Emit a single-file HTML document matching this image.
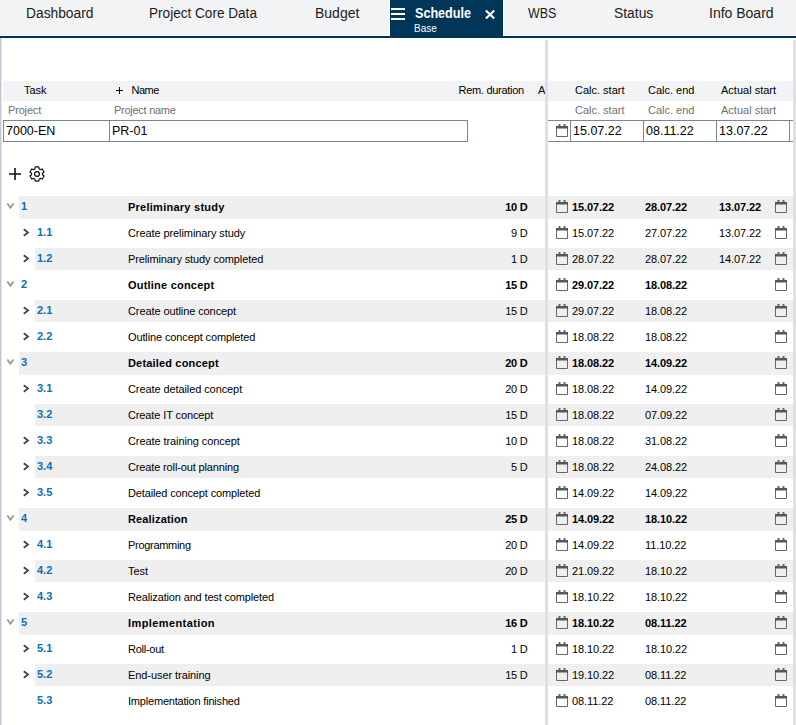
<!DOCTYPE html><html><head><meta charset="utf-8"><style>
*{margin:0;padding:0;box-sizing:border-box}
html,body{width:796px;height:725px;overflow:hidden;background:#fff}
body{position:relative;font-family:"Liberation Sans",sans-serif;color:#000}
.a{position:absolute;white-space:nowrap}
.tabbar{position:absolute;left:0;top:0;width:796px;height:35px;background:#f2f3f5}
.tabline{position:absolute;left:0;top:36px;width:796px;height:2px;background:#013258}
.tab{position:absolute;top:0;font-size:14px;line-height:26px;color:#1c1c1c}
.act{position:absolute;left:390px;top:0;width:113px;height:38px;background:#023659}
.vsep{position:absolute;top:0;width:1px;height:36px;background:#fff}
.lb{position:absolute;left:0;top:38px;width:1px;height:687px;background:#c3c5d5;box-shadow:1px 0 0 #e6e7ef}
.spl{position:absolute;left:545px;top:40px;width:3px;height:685px;background:#e3dde6}
.rb{position:absolute;left:793px;top:40px;width:3px;height:685px;background:#e3dde6}
.hband{position:absolute;top:81px;height:20px;background:#f2f3f5}
.ht{font-size:11px;line-height:20px;top:80px}
.st{font-size:11px;line-height:20px;top:100px;color:#707070}
.inp{position:absolute;top:120px;height:22px;border:1px solid #7b8693}
.it{font-size:12.5px;line-height:20px;top:121px;color:#000}
.row{position:absolute;left:0;width:796px;height:26px}
.band{position:absolute;top:0;height:23px;background:#efefef}
.t{position:absolute;top:0;font-size:11px;line-height:23px;white-space:nowrap}
.b{font-weight:bold}
.d{letter-spacing:-0.1px}
.num{color:#0a70b0;font-weight:bold;margin-top:-1px}
.cal{position:absolute}
svg{display:block}
</style></head><body>
<div class="tabbar"></div>
<div class="a" style="left:0;top:35px;width:796px;height:1px;background:#fff"></div>
<div class="tabline"></div>
<div class="a tab" style="left:26px;transform:scaleX(0.985);transform-origin:0 0">Dashboard</div>
<div class="a tab" style="left:149px;transform:scaleX(0.97);transform-origin:0 0">Project Core Data</div>
<div class="a tab" style="left:315px;transform:scaleX(1);transform-origin:0 0">Budget</div>
<div class="a tab" style="left:528px;transform:scaleX(0.89);transform-origin:0 0">WBS</div>
<div class="a tab" style="left:614px;transform:scaleX(0.99);transform-origin:0 0">Status</div>
<div class="a tab" style="left:709px;transform:scaleX(1);transform-origin:0 0">Info Board</div>
<div class="act"></div>
<div class="vsep" style="left:389px"></div><div class="vsep" style="left:503px"></div>
<div class="a" style="left:391px;top:8.3px;width:14px;height:1.6px;background:#fff"></div>
<div class="a" style="left:391px;top:13.3px;width:14px;height:1.6px;background:#fff"></div>
<div class="a" style="left:391px;top:18.3px;width:14px;height:1.6px;background:#fff"></div>
<div class="a" style="left:415px;top:0;font-size:14px;font-weight:bold;line-height:26px;color:#fff;transform:scaleX(0.9);transform-origin:0 0">Schedule</div>
<div class="a" style="left:414px;top:21px;font-size:10px;line-height:16px;color:#fff">Base</div>
<svg class="a" style="left:484px;top:9px" width="12" height="12" viewBox="0 0 12 12"><path d="M1.9 1.5l8.3 8.1M10.2 1.5l-8.3 8.1" stroke="#fff" stroke-width="2.1"/></svg>
<div class="lb"></div><div class="spl"></div><div class="rb"></div>
<div class="hband" style="left:3px;width:542px"></div>
<div class="hband" style="left:548px;width:245px"></div>
<div class="a ht" style="left:24px">Task</div>
<svg class="a" style="left:116px;top:87px" width="7" height="7" viewBox="0 0 7 7"><path d="M3.5 0v7M0 3.5h7" stroke="#111" stroke-width="1"/></svg>
<div class="a ht" style="left:131.5px;letter-spacing:-0.5px">Name</div>
<div class="a ht" style="left:458.5px;letter-spacing:-0.28px">Rem. duration</div>
<div class="a ht" style="left:538px;width:7px;overflow:hidden">A</div>
<div class="a ht" style="left:575px">Calc. start</div>
<div class="a ht" style="left:648px">Calc. end</div>
<div class="a ht" style="left:721px">Actual start</div>
<div class="a st" style="left:8px;letter-spacing:-0.17px">Project</div>
<div class="a st" style="left:114px;letter-spacing:-0.27px">Project name</div>
<div class="a st" style="left:575px">Calc. start</div>
<div class="a st" style="left:648px">Calc. end</div>
<div class="a st" style="left:721px">Actual start</div>
<div class="inp" style="left:3px;width:107px"></div>
<div class="inp" style="left:109px;width:359px"></div>
<div class="inp" style="left:548px;width:23px;border-left:none;border-right:none"></div>
<div class="inp" style="left:570px;width:74px"></div>
<div class="inp" style="left:643px;width:74px"></div>
<div class="inp" style="left:716px;width:77px;border-right:none"></div>
<div class="a" style="left:789px;top:120px;width:1px;height:22px;background:#7b8693"></div>
<svg class="cal" style="left:556px;top:124px" width="12" height="13" viewBox="0 0 12 13"><path d="M0.5 2.5v10h11v-10" fill="none" stroke="#666" stroke-width="1"/><rect x="0" y="2" width="12" height="2.5" fill="#555"/><rect x="2.5" y="0" width="2" height="2.5" fill="#666"/><rect x="7.5" y="0" width="2" height="2.5" fill="#666"/></svg>
<div class="a it" style="left:6px">7000-EN</div>
<div class="a it" style="left:112px">PR-01</div>
<div class="a it" style="left:573px">15.07.22</div>
<div class="a it" style="left:646px">08.11.22</div>
<div class="a it" style="left:719px">13.07.22</div>
<svg class="a" style="left:8px;top:167px" width="14" height="14" viewBox="0 0 14 14"><path d="M7 1v12M1 7h12" stroke="#111" stroke-width="1.6"/></svg>
<svg class="a" style="left:28px;top:165px" width="18" height="18" viewBox="-9 -9 18 18"><path d="M-3.32 -4.39L-3.04 -4.58L-2.75 -4.76L-2.45 -4.92L-2.14 -5.07L-2.14 -5.07L-1.74 -7.09L1.74 -7.09L2.14 -5.07L2.14 -5.07L2.45 -4.92L2.75 -4.76L3.04 -4.58L3.32 -4.39L3.32 -4.39L5.27 -5.05L7.01 -2.04L5.46 -0.68L5.46 -0.68L5.49 -0.34L5.50 -0.00L5.49 0.34L5.46 0.68L5.46 0.68L7.01 2.04L5.27 5.05L3.32 4.39L3.32 4.39L3.04 4.58L2.75 4.76L2.45 4.92L2.14 5.07L2.14 5.07L1.74 7.09L-1.74 7.09L-2.14 5.07L-2.14 5.07L-2.45 4.92L-2.75 4.76L-3.04 4.58L-3.32 4.39L-3.32 4.39L-5.27 5.05L-7.01 2.04L-5.46 0.68L-5.46 0.68L-5.49 0.34L-5.50 -0.00L-5.49 -0.34L-5.46 -0.68L-5.46 -0.68L-7.01 -2.04L-5.27 -5.05L-3.32 -4.39Z" fill="none" stroke="#111" stroke-width="1.2" stroke-linejoin="round"/><circle cx="0" cy="0" r="2.4" fill="none" stroke="#111" stroke-width="1.2"/></svg>
<div class="row" style="top:196px">
<div class="band" style="left:19px;width:526px;height:23px"></div>
<div class="band" style="left:548px;width:245px;height:23px"></div>
<div class="a" style="left:6px;top:5.5px"><svg width="9" height="8" viewBox="0 0 9 8"><path d="M1.3 1.5l3.1 4.2l3.1-4.2" fill="none" stroke="#999" stroke-width="1.9"/></svg></div>
<div class="t num" style="left:21px">1</div>
<div class="t b" style="left:128px;letter-spacing:0.253px">Preliminary study</div>
<div class="t b" style="right:268.7px;letter-spacing:-0.3px">10 D</div>
<svg class="cal" style="left:556px;top:4px" width="12" height="13" viewBox="0 0 12 13"><path d="M0.5 2.5v10h11v-10" fill="none" stroke="#666" stroke-width="1"/><rect x="0" y="2" width="12" height="2.5" fill="#555"/><rect x="2.5" y="0" width="2" height="2.5" fill="#666"/><rect x="7.5" y="0" width="2" height="2.5" fill="#666"/></svg>
<div class="t d b" style="left:572px">15.07.22</div>
<div class="t d b" style="left:645px">28.07.22</div>
<div class="t d b" style="left:719px">13.07.22</div>
<svg class="cal" style="left:775px;top:4px" width="12" height="13" viewBox="0 0 12 13"><path d="M0.5 2.5v10h11v-10" fill="none" stroke="#666" stroke-width="1"/><rect x="0" y="2" width="12" height="2.5" fill="#555"/><rect x="2.5" y="0" width="2" height="2.5" fill="#666"/><rect x="7.5" y="0" width="2" height="2.5" fill="#666"/></svg>
</div>
<div class="row" style="top:222px">
<div class="a" style="left:22px;top:6px"><svg width="8" height="9" viewBox="0 0 8 9"><path d="M1.8 1.2l4.2 3.3l-4.2 3.3" fill="none" stroke="#4a4a4a" stroke-width="1.9"/></svg></div>
<div class="t num" style="left:37px">1.1</div>
<div class="t" style="left:128px;letter-spacing:-0.087px">Create preliminary study</div>
<div class="t" style="right:268.7px;letter-spacing:-0.3px">9 D</div>
<svg class="cal" style="left:556px;top:4px" width="12" height="13" viewBox="0 0 12 13"><path d="M0.5 2.5v10h11v-10" fill="none" stroke="#666" stroke-width="1"/><rect x="0" y="2" width="12" height="2.5" fill="#555"/><rect x="2.5" y="0" width="2" height="2.5" fill="#666"/><rect x="7.5" y="0" width="2" height="2.5" fill="#666"/></svg>
<div class="t d" style="left:572px">15.07.22</div>
<div class="t d" style="left:645px">27.07.22</div>
<div class="t d" style="left:719px">13.07.22</div>
<svg class="cal" style="left:775px;top:4px" width="12" height="13" viewBox="0 0 12 13"><path d="M0.5 2.5v10h11v-10" fill="none" stroke="#666" stroke-width="1"/><rect x="0" y="2" width="12" height="2.5" fill="#555"/><rect x="2.5" y="0" width="2" height="2.5" fill="#666"/><rect x="7.5" y="0" width="2" height="2.5" fill="#666"/></svg>
</div>
<div class="row" style="top:248px">
<div class="band" style="left:35px;width:510px;height:22px"></div>
<div class="band" style="left:548px;width:245px;height:22px"></div>
<div class="a" style="left:22px;top:6px"><svg width="8" height="9" viewBox="0 0 8 9"><path d="M1.8 1.2l4.2 3.3l-4.2 3.3" fill="none" stroke="#4a4a4a" stroke-width="1.9"/></svg></div>
<div class="t num" style="left:37px">1.2</div>
<div class="t" style="left:128px;letter-spacing:-0.111px">Preliminary study completed</div>
<div class="t" style="right:268.7px;letter-spacing:-0.3px">1 D</div>
<svg class="cal" style="left:556px;top:4px" width="12" height="13" viewBox="0 0 12 13"><path d="M0.5 2.5v10h11v-10" fill="none" stroke="#666" stroke-width="1"/><rect x="0" y="2" width="12" height="2.5" fill="#555"/><rect x="2.5" y="0" width="2" height="2.5" fill="#666"/><rect x="7.5" y="0" width="2" height="2.5" fill="#666"/></svg>
<div class="t d" style="left:572px">28.07.22</div>
<div class="t d" style="left:645px">28.07.22</div>
<div class="t d" style="left:719px">14.07.22</div>
<svg class="cal" style="left:775px;top:4px" width="12" height="13" viewBox="0 0 12 13"><path d="M0.5 2.5v10h11v-10" fill="none" stroke="#666" stroke-width="1"/><rect x="0" y="2" width="12" height="2.5" fill="#555"/><rect x="2.5" y="0" width="2" height="2.5" fill="#666"/><rect x="7.5" y="0" width="2" height="2.5" fill="#666"/></svg>
</div>
<div class="row" style="top:274px">
<div class="a" style="left:6px;top:5.5px"><svg width="9" height="8" viewBox="0 0 9 8"><path d="M1.3 1.5l3.1 4.2l3.1-4.2" fill="none" stroke="#999" stroke-width="1.9"/></svg></div>
<div class="t num" style="left:21px">2</div>
<div class="t b" style="left:128px;letter-spacing:0.213px">Outline concept</div>
<div class="t b" style="right:268.7px;letter-spacing:-0.3px">15 D</div>
<svg class="cal" style="left:556px;top:4px" width="12" height="13" viewBox="0 0 12 13"><path d="M0.5 2.5v10h11v-10" fill="none" stroke="#666" stroke-width="1"/><rect x="0" y="2" width="12" height="2.5" fill="#555"/><rect x="2.5" y="0" width="2" height="2.5" fill="#666"/><rect x="7.5" y="0" width="2" height="2.5" fill="#666"/></svg>
<div class="t d b" style="left:572px">29.07.22</div>
<div class="t d b" style="left:645px">18.08.22</div>
<svg class="cal" style="left:775px;top:4px" width="12" height="13" viewBox="0 0 12 13"><path d="M0.5 2.5v10h11v-10" fill="none" stroke="#666" stroke-width="1"/><rect x="0" y="2" width="12" height="2.5" fill="#555"/><rect x="2.5" y="0" width="2" height="2.5" fill="#666"/><rect x="7.5" y="0" width="2" height="2.5" fill="#666"/></svg>
</div>
<div class="row" style="top:300px">
<div class="band" style="left:35px;width:510px;height:22px"></div>
<div class="band" style="left:548px;width:245px;height:22px"></div>
<div class="a" style="left:22px;top:6px"><svg width="8" height="9" viewBox="0 0 8 9"><path d="M1.8 1.2l4.2 3.3l-4.2 3.3" fill="none" stroke="#4a4a4a" stroke-width="1.9"/></svg></div>
<div class="t num" style="left:37px">2.1</div>
<div class="t" style="left:128px;letter-spacing:-0.091px">Create outline concept</div>
<div class="t" style="right:268.7px;letter-spacing:-0.3px">15 D</div>
<svg class="cal" style="left:556px;top:4px" width="12" height="13" viewBox="0 0 12 13"><path d="M0.5 2.5v10h11v-10" fill="none" stroke="#666" stroke-width="1"/><rect x="0" y="2" width="12" height="2.5" fill="#555"/><rect x="2.5" y="0" width="2" height="2.5" fill="#666"/><rect x="7.5" y="0" width="2" height="2.5" fill="#666"/></svg>
<div class="t d" style="left:572px">29.07.22</div>
<div class="t d" style="left:645px">18.08.22</div>
<svg class="cal" style="left:775px;top:4px" width="12" height="13" viewBox="0 0 12 13"><path d="M0.5 2.5v10h11v-10" fill="none" stroke="#666" stroke-width="1"/><rect x="0" y="2" width="12" height="2.5" fill="#555"/><rect x="2.5" y="0" width="2" height="2.5" fill="#666"/><rect x="7.5" y="0" width="2" height="2.5" fill="#666"/></svg>
</div>
<div class="row" style="top:326px">
<div class="a" style="left:22px;top:6px"><svg width="8" height="9" viewBox="0 0 8 9"><path d="M1.8 1.2l4.2 3.3l-4.2 3.3" fill="none" stroke="#4a4a4a" stroke-width="1.9"/></svg></div>
<div class="t num" style="left:37px">2.2</div>
<div class="t" style="left:128px;letter-spacing:-0.120px">Outline concept completed</div>
<svg class="cal" style="left:556px;top:4px" width="12" height="13" viewBox="0 0 12 13"><path d="M0.5 2.5v10h11v-10" fill="none" stroke="#666" stroke-width="1"/><rect x="0" y="2" width="12" height="2.5" fill="#555"/><rect x="2.5" y="0" width="2" height="2.5" fill="#666"/><rect x="7.5" y="0" width="2" height="2.5" fill="#666"/></svg>
<div class="t d" style="left:572px">18.08.22</div>
<div class="t d" style="left:645px">18.08.22</div>
<svg class="cal" style="left:775px;top:4px" width="12" height="13" viewBox="0 0 12 13"><path d="M0.5 2.5v10h11v-10" fill="none" stroke="#666" stroke-width="1"/><rect x="0" y="2" width="12" height="2.5" fill="#555"/><rect x="2.5" y="0" width="2" height="2.5" fill="#666"/><rect x="7.5" y="0" width="2" height="2.5" fill="#666"/></svg>
</div>
<div class="row" style="top:352px">
<div class="band" style="left:19px;width:526px;height:23px"></div>
<div class="band" style="left:548px;width:245px;height:23px"></div>
<div class="a" style="left:6px;top:5.5px"><svg width="9" height="8" viewBox="0 0 9 8"><path d="M1.3 1.5l3.1 4.2l3.1-4.2" fill="none" stroke="#999" stroke-width="1.9"/></svg></div>
<div class="t num" style="left:21px">3</div>
<div class="t b" style="left:128px;letter-spacing:0.169px">Detailed concept</div>
<div class="t b" style="right:268.7px;letter-spacing:-0.3px">20 D</div>
<svg class="cal" style="left:556px;top:4px" width="12" height="13" viewBox="0 0 12 13"><path d="M0.5 2.5v10h11v-10" fill="none" stroke="#666" stroke-width="1"/><rect x="0" y="2" width="12" height="2.5" fill="#555"/><rect x="2.5" y="0" width="2" height="2.5" fill="#666"/><rect x="7.5" y="0" width="2" height="2.5" fill="#666"/></svg>
<div class="t d b" style="left:572px">18.08.22</div>
<div class="t d b" style="left:645px">14.09.22</div>
<svg class="cal" style="left:775px;top:4px" width="12" height="13" viewBox="0 0 12 13"><path d="M0.5 2.5v10h11v-10" fill="none" stroke="#666" stroke-width="1"/><rect x="0" y="2" width="12" height="2.5" fill="#555"/><rect x="2.5" y="0" width="2" height="2.5" fill="#666"/><rect x="7.5" y="0" width="2" height="2.5" fill="#666"/></svg>
</div>
<div class="row" style="top:378px">
<div class="a" style="left:22px;top:6px"><svg width="8" height="9" viewBox="0 0 8 9"><path d="M1.8 1.2l4.2 3.3l-4.2 3.3" fill="none" stroke="#4a4a4a" stroke-width="1.9"/></svg></div>
<div class="t num" style="left:37px">3.1</div>
<div class="t" style="left:128px;letter-spacing:-0.091px">Create detailed concept</div>
<div class="t" style="right:268.7px;letter-spacing:-0.3px">20 D</div>
<svg class="cal" style="left:556px;top:4px" width="12" height="13" viewBox="0 0 12 13"><path d="M0.5 2.5v10h11v-10" fill="none" stroke="#666" stroke-width="1"/><rect x="0" y="2" width="12" height="2.5" fill="#555"/><rect x="2.5" y="0" width="2" height="2.5" fill="#666"/><rect x="7.5" y="0" width="2" height="2.5" fill="#666"/></svg>
<div class="t d" style="left:572px">18.08.22</div>
<div class="t d" style="left:645px">14.09.22</div>
<svg class="cal" style="left:775px;top:4px" width="12" height="13" viewBox="0 0 12 13"><path d="M0.5 2.5v10h11v-10" fill="none" stroke="#666" stroke-width="1"/><rect x="0" y="2" width="12" height="2.5" fill="#555"/><rect x="2.5" y="0" width="2" height="2.5" fill="#666"/><rect x="7.5" y="0" width="2" height="2.5" fill="#666"/></svg>
</div>
<div class="row" style="top:404px">
<div class="band" style="left:35px;width:510px;height:22px"></div>
<div class="band" style="left:548px;width:245px;height:22px"></div>
<div class="t num" style="left:37px">3.2</div>
<div class="t" style="left:128px;letter-spacing:-0.118px">Create IT concept</div>
<div class="t" style="right:268.7px;letter-spacing:-0.3px">15 D</div>
<svg class="cal" style="left:556px;top:4px" width="12" height="13" viewBox="0 0 12 13"><path d="M0.5 2.5v10h11v-10" fill="none" stroke="#666" stroke-width="1"/><rect x="0" y="2" width="12" height="2.5" fill="#555"/><rect x="2.5" y="0" width="2" height="2.5" fill="#666"/><rect x="7.5" y="0" width="2" height="2.5" fill="#666"/></svg>
<div class="t d" style="left:572px">18.08.22</div>
<div class="t d" style="left:645px">07.09.22</div>
<svg class="cal" style="left:775px;top:4px" width="12" height="13" viewBox="0 0 12 13"><path d="M0.5 2.5v10h11v-10" fill="none" stroke="#666" stroke-width="1"/><rect x="0" y="2" width="12" height="2.5" fill="#555"/><rect x="2.5" y="0" width="2" height="2.5" fill="#666"/><rect x="7.5" y="0" width="2" height="2.5" fill="#666"/></svg>
</div>
<div class="row" style="top:430px">
<div class="a" style="left:22px;top:6px"><svg width="8" height="9" viewBox="0 0 8 9"><path d="M1.8 1.2l4.2 3.3l-4.2 3.3" fill="none" stroke="#4a4a4a" stroke-width="1.9"/></svg></div>
<div class="t num" style="left:37px">3.3</div>
<div class="t" style="left:128px;letter-spacing:-0.087px">Create training concept</div>
<div class="t" style="right:268.7px;letter-spacing:-0.3px">10 D</div>
<svg class="cal" style="left:556px;top:4px" width="12" height="13" viewBox="0 0 12 13"><path d="M0.5 2.5v10h11v-10" fill="none" stroke="#666" stroke-width="1"/><rect x="0" y="2" width="12" height="2.5" fill="#555"/><rect x="2.5" y="0" width="2" height="2.5" fill="#666"/><rect x="7.5" y="0" width="2" height="2.5" fill="#666"/></svg>
<div class="t d" style="left:572px">18.08.22</div>
<div class="t d" style="left:645px">31.08.22</div>
<svg class="cal" style="left:775px;top:4px" width="12" height="13" viewBox="0 0 12 13"><path d="M0.5 2.5v10h11v-10" fill="none" stroke="#666" stroke-width="1"/><rect x="0" y="2" width="12" height="2.5" fill="#555"/><rect x="2.5" y="0" width="2" height="2.5" fill="#666"/><rect x="7.5" y="0" width="2" height="2.5" fill="#666"/></svg>
</div>
<div class="row" style="top:456px">
<div class="band" style="left:35px;width:510px;height:22px"></div>
<div class="band" style="left:548px;width:245px;height:22px"></div>
<div class="a" style="left:22px;top:6px"><svg width="8" height="9" viewBox="0 0 8 9"><path d="M1.8 1.2l4.2 3.3l-4.2 3.3" fill="none" stroke="#4a4a4a" stroke-width="1.9"/></svg></div>
<div class="t num" style="left:37px">3.4</div>
<div class="t" style="left:128px;letter-spacing:-0.142px">Create roll-out planning</div>
<div class="t" style="right:268.7px;letter-spacing:-0.3px">5 D</div>
<svg class="cal" style="left:556px;top:4px" width="12" height="13" viewBox="0 0 12 13"><path d="M0.5 2.5v10h11v-10" fill="none" stroke="#666" stroke-width="1"/><rect x="0" y="2" width="12" height="2.5" fill="#555"/><rect x="2.5" y="0" width="2" height="2.5" fill="#666"/><rect x="7.5" y="0" width="2" height="2.5" fill="#666"/></svg>
<div class="t d" style="left:572px">18.08.22</div>
<div class="t d" style="left:645px">24.08.22</div>
<svg class="cal" style="left:775px;top:4px" width="12" height="13" viewBox="0 0 12 13"><path d="M0.5 2.5v10h11v-10" fill="none" stroke="#666" stroke-width="1"/><rect x="0" y="2" width="12" height="2.5" fill="#555"/><rect x="2.5" y="0" width="2" height="2.5" fill="#666"/><rect x="7.5" y="0" width="2" height="2.5" fill="#666"/></svg>
</div>
<div class="row" style="top:482px">
<div class="a" style="left:22px;top:6px"><svg width="8" height="9" viewBox="0 0 8 9"><path d="M1.8 1.2l4.2 3.3l-4.2 3.3" fill="none" stroke="#4a4a4a" stroke-width="1.9"/></svg></div>
<div class="t num" style="left:37px">3.5</div>
<div class="t" style="left:128px;letter-spacing:-0.138px">Detailed concept completed</div>
<svg class="cal" style="left:556px;top:4px" width="12" height="13" viewBox="0 0 12 13"><path d="M0.5 2.5v10h11v-10" fill="none" stroke="#666" stroke-width="1"/><rect x="0" y="2" width="12" height="2.5" fill="#555"/><rect x="2.5" y="0" width="2" height="2.5" fill="#666"/><rect x="7.5" y="0" width="2" height="2.5" fill="#666"/></svg>
<div class="t d" style="left:572px">14.09.22</div>
<div class="t d" style="left:645px">14.09.22</div>
<svg class="cal" style="left:775px;top:4px" width="12" height="13" viewBox="0 0 12 13"><path d="M0.5 2.5v10h11v-10" fill="none" stroke="#666" stroke-width="1"/><rect x="0" y="2" width="12" height="2.5" fill="#555"/><rect x="2.5" y="0" width="2" height="2.5" fill="#666"/><rect x="7.5" y="0" width="2" height="2.5" fill="#666"/></svg>
</div>
<div class="row" style="top:508px">
<div class="band" style="left:19px;width:526px;height:23px"></div>
<div class="band" style="left:548px;width:245px;height:23px"></div>
<div class="a" style="left:6px;top:5.5px"><svg width="9" height="8" viewBox="0 0 9 8"><path d="M1.3 1.5l3.1 4.2l3.1-4.2" fill="none" stroke="#999" stroke-width="1.9"/></svg></div>
<div class="t num" style="left:21px">4</div>
<div class="t b" style="left:128px;letter-spacing:0.145px">Realization</div>
<div class="t b" style="right:268.7px;letter-spacing:-0.3px">25 D</div>
<svg class="cal" style="left:556px;top:4px" width="12" height="13" viewBox="0 0 12 13"><path d="M0.5 2.5v10h11v-10" fill="none" stroke="#666" stroke-width="1"/><rect x="0" y="2" width="12" height="2.5" fill="#555"/><rect x="2.5" y="0" width="2" height="2.5" fill="#666"/><rect x="7.5" y="0" width="2" height="2.5" fill="#666"/></svg>
<div class="t d b" style="left:572px">14.09.22</div>
<div class="t d b" style="left:645px">18.10.22</div>
<svg class="cal" style="left:775px;top:4px" width="12" height="13" viewBox="0 0 12 13"><path d="M0.5 2.5v10h11v-10" fill="none" stroke="#666" stroke-width="1"/><rect x="0" y="2" width="12" height="2.5" fill="#555"/><rect x="2.5" y="0" width="2" height="2.5" fill="#666"/><rect x="7.5" y="0" width="2" height="2.5" fill="#666"/></svg>
</div>
<div class="row" style="top:534px">
<div class="a" style="left:22px;top:6px"><svg width="8" height="9" viewBox="0 0 8 9"><path d="M1.8 1.2l4.2 3.3l-4.2 3.3" fill="none" stroke="#4a4a4a" stroke-width="1.9"/></svg></div>
<div class="t num" style="left:37px">4.1</div>
<div class="t" style="left:128px;letter-spacing:-0.300px">Programming</div>
<div class="t" style="right:268.7px;letter-spacing:-0.3px">20 D</div>
<svg class="cal" style="left:556px;top:4px" width="12" height="13" viewBox="0 0 12 13"><path d="M0.5 2.5v10h11v-10" fill="none" stroke="#666" stroke-width="1"/><rect x="0" y="2" width="12" height="2.5" fill="#555"/><rect x="2.5" y="0" width="2" height="2.5" fill="#666"/><rect x="7.5" y="0" width="2" height="2.5" fill="#666"/></svg>
<div class="t d" style="left:572px">14.09.22</div>
<div class="t d" style="left:645px">11.10.22</div>
<svg class="cal" style="left:775px;top:4px" width="12" height="13" viewBox="0 0 12 13"><path d="M0.5 2.5v10h11v-10" fill="none" stroke="#666" stroke-width="1"/><rect x="0" y="2" width="12" height="2.5" fill="#555"/><rect x="2.5" y="0" width="2" height="2.5" fill="#666"/><rect x="7.5" y="0" width="2" height="2.5" fill="#666"/></svg>
</div>
<div class="row" style="top:560px">
<div class="band" style="left:35px;width:510px;height:22px"></div>
<div class="band" style="left:548px;width:245px;height:22px"></div>
<div class="a" style="left:22px;top:6px"><svg width="8" height="9" viewBox="0 0 8 9"><path d="M1.8 1.2l4.2 3.3l-4.2 3.3" fill="none" stroke="#4a4a4a" stroke-width="1.9"/></svg></div>
<div class="t num" style="left:37px">4.2</div>
<div class="t" style="left:128px;letter-spacing:-0.050px">Test</div>
<div class="t" style="right:268.7px;letter-spacing:-0.3px">20 D</div>
<svg class="cal" style="left:556px;top:4px" width="12" height="13" viewBox="0 0 12 13"><path d="M0.5 2.5v10h11v-10" fill="none" stroke="#666" stroke-width="1"/><rect x="0" y="2" width="12" height="2.5" fill="#555"/><rect x="2.5" y="0" width="2" height="2.5" fill="#666"/><rect x="7.5" y="0" width="2" height="2.5" fill="#666"/></svg>
<div class="t d" style="left:572px">21.09.22</div>
<div class="t d" style="left:645px">18.10.22</div>
<svg class="cal" style="left:775px;top:4px" width="12" height="13" viewBox="0 0 12 13"><path d="M0.5 2.5v10h11v-10" fill="none" stroke="#666" stroke-width="1"/><rect x="0" y="2" width="12" height="2.5" fill="#555"/><rect x="2.5" y="0" width="2" height="2.5" fill="#666"/><rect x="7.5" y="0" width="2" height="2.5" fill="#666"/></svg>
</div>
<div class="row" style="top:586px">
<div class="a" style="left:22px;top:6px"><svg width="8" height="9" viewBox="0 0 8 9"><path d="M1.8 1.2l4.2 3.3l-4.2 3.3" fill="none" stroke="#4a4a4a" stroke-width="1.9"/></svg></div>
<div class="t num" style="left:37px">4.3</div>
<div class="t" style="left:128px;letter-spacing:-0.150px">Realization and test completed</div>
<svg class="cal" style="left:556px;top:4px" width="12" height="13" viewBox="0 0 12 13"><path d="M0.5 2.5v10h11v-10" fill="none" stroke="#666" stroke-width="1"/><rect x="0" y="2" width="12" height="2.5" fill="#555"/><rect x="2.5" y="0" width="2" height="2.5" fill="#666"/><rect x="7.5" y="0" width="2" height="2.5" fill="#666"/></svg>
<div class="t d" style="left:572px">18.10.22</div>
<div class="t d" style="left:645px">18.10.22</div>
<svg class="cal" style="left:775px;top:4px" width="12" height="13" viewBox="0 0 12 13"><path d="M0.5 2.5v10h11v-10" fill="none" stroke="#666" stroke-width="1"/><rect x="0" y="2" width="12" height="2.5" fill="#555"/><rect x="2.5" y="0" width="2" height="2.5" fill="#666"/><rect x="7.5" y="0" width="2" height="2.5" fill="#666"/></svg>
</div>
<div class="row" style="top:612px">
<div class="band" style="left:19px;width:526px;height:23px"></div>
<div class="band" style="left:548px;width:245px;height:23px"></div>
<div class="a" style="left:6px;top:5.5px"><svg width="9" height="8" viewBox="0 0 9 8"><path d="M1.3 1.5l3.1 4.2l3.1-4.2" fill="none" stroke="#999" stroke-width="1.9"/></svg></div>
<div class="t num" style="left:21px">5</div>
<div class="t b" style="left:128px;letter-spacing:0.407px">Implementation</div>
<div class="t b" style="right:268.7px;letter-spacing:-0.3px">16 D</div>
<svg class="cal" style="left:556px;top:4px" width="12" height="13" viewBox="0 0 12 13"><path d="M0.5 2.5v10h11v-10" fill="none" stroke="#666" stroke-width="1"/><rect x="0" y="2" width="12" height="2.5" fill="#555"/><rect x="2.5" y="0" width="2" height="2.5" fill="#666"/><rect x="7.5" y="0" width="2" height="2.5" fill="#666"/></svg>
<div class="t d b" style="left:572px">18.10.22</div>
<div class="t d b" style="left:645px">08.11.22</div>
<svg class="cal" style="left:775px;top:4px" width="12" height="13" viewBox="0 0 12 13"><path d="M0.5 2.5v10h11v-10" fill="none" stroke="#666" stroke-width="1"/><rect x="0" y="2" width="12" height="2.5" fill="#555"/><rect x="2.5" y="0" width="2" height="2.5" fill="#666"/><rect x="7.5" y="0" width="2" height="2.5" fill="#666"/></svg>
</div>
<div class="row" style="top:638px">
<div class="a" style="left:22px;top:6px"><svg width="8" height="9" viewBox="0 0 8 9"><path d="M1.8 1.2l4.2 3.3l-4.2 3.3" fill="none" stroke="#4a4a4a" stroke-width="1.9"/></svg></div>
<div class="t num" style="left:37px">5.1</div>
<div class="t" style="left:128px;letter-spacing:-0.262px">Roll-out</div>
<div class="t" style="right:268.7px;letter-spacing:-0.3px">1 D</div>
<svg class="cal" style="left:556px;top:4px" width="12" height="13" viewBox="0 0 12 13"><path d="M0.5 2.5v10h11v-10" fill="none" stroke="#666" stroke-width="1"/><rect x="0" y="2" width="12" height="2.5" fill="#555"/><rect x="2.5" y="0" width="2" height="2.5" fill="#666"/><rect x="7.5" y="0" width="2" height="2.5" fill="#666"/></svg>
<div class="t d" style="left:572px">18.10.22</div>
<div class="t d" style="left:645px">18.10.22</div>
<svg class="cal" style="left:775px;top:4px" width="12" height="13" viewBox="0 0 12 13"><path d="M0.5 2.5v10h11v-10" fill="none" stroke="#666" stroke-width="1"/><rect x="0" y="2" width="12" height="2.5" fill="#555"/><rect x="2.5" y="0" width="2" height="2.5" fill="#666"/><rect x="7.5" y="0" width="2" height="2.5" fill="#666"/></svg>
</div>
<div class="row" style="top:664px">
<div class="band" style="left:35px;width:510px;height:22px"></div>
<div class="band" style="left:548px;width:245px;height:22px"></div>
<div class="a" style="left:22px;top:6px"><svg width="8" height="9" viewBox="0 0 8 9"><path d="M1.8 1.2l4.2 3.3l-4.2 3.3" fill="none" stroke="#4a4a4a" stroke-width="1.9"/></svg></div>
<div class="t num" style="left:37px">5.2</div>
<div class="t" style="left:128px;letter-spacing:-0.071px">End-user training</div>
<div class="t" style="right:268.7px;letter-spacing:-0.3px">15 D</div>
<svg class="cal" style="left:556px;top:4px" width="12" height="13" viewBox="0 0 12 13"><path d="M0.5 2.5v10h11v-10" fill="none" stroke="#666" stroke-width="1"/><rect x="0" y="2" width="12" height="2.5" fill="#555"/><rect x="2.5" y="0" width="2" height="2.5" fill="#666"/><rect x="7.5" y="0" width="2" height="2.5" fill="#666"/></svg>
<div class="t d" style="left:572px">19.10.22</div>
<div class="t d" style="left:645px">08.11.22</div>
<svg class="cal" style="left:775px;top:4px" width="12" height="13" viewBox="0 0 12 13"><path d="M0.5 2.5v10h11v-10" fill="none" stroke="#666" stroke-width="1"/><rect x="0" y="2" width="12" height="2.5" fill="#555"/><rect x="2.5" y="0" width="2" height="2.5" fill="#666"/><rect x="7.5" y="0" width="2" height="2.5" fill="#666"/></svg>
</div>
<div class="row" style="top:690px">
<div class="t num" style="left:37px">5.3</div>
<div class="t" style="left:128px;letter-spacing:-0.196px">Implementation finished</div>
<svg class="cal" style="left:556px;top:4px" width="12" height="13" viewBox="0 0 12 13"><path d="M0.5 2.5v10h11v-10" fill="none" stroke="#666" stroke-width="1"/><rect x="0" y="2" width="12" height="2.5" fill="#555"/><rect x="2.5" y="0" width="2" height="2.5" fill="#666"/><rect x="7.5" y="0" width="2" height="2.5" fill="#666"/></svg>
<div class="t d" style="left:572px">08.11.22</div>
<div class="t d" style="left:645px">08.11.22</div>
<svg class="cal" style="left:775px;top:4px" width="12" height="13" viewBox="0 0 12 13"><path d="M0.5 2.5v10h11v-10" fill="none" stroke="#666" stroke-width="1"/><rect x="0" y="2" width="12" height="2.5" fill="#555"/><rect x="2.5" y="0" width="2" height="2.5" fill="#666"/><rect x="7.5" y="0" width="2" height="2.5" fill="#666"/></svg>
</div>
</body></html>
